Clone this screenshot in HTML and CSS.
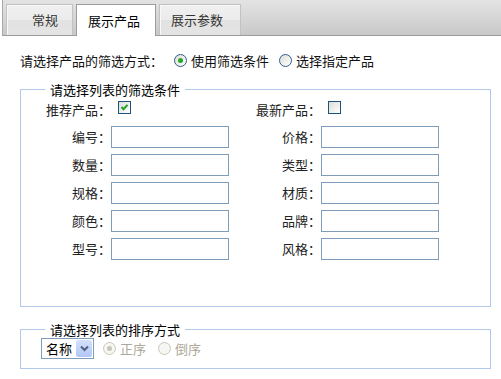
FILE: index.html
```html
<!DOCTYPE html>
<html lang="zh-CN">
<head>
  <meta charset="UTF-8">
  <title>展示产品</title>
  <link rel="stylesheet" href="styles.css">
</head>
<body>
  <div class="tabs">
    <div class="tab tab-first">常规</div>
    <div class="tab active">展示产品</div>
    <div class="tab">展示参数</div>
  </div>

  <div class="panel">
    <div class="mode-row">
      <span class="mode-label">请选择产品的筛选方式：</span>
      <label class="opt opt-first"><span class="radio on"></span>使用筛选条件</label>
      <label class="opt"><span class="radio"></span>选择指定产品</label>
    </div>

    <fieldset class="box filter">
      <legend>请选择列表的筛选条件</legend>
      <div class="grid">
        <label class="lbl">推荐产品：</label>
        <span class="cell">
          <span class="check">
            <svg width="11" height="11" viewBox="0 0 11 11"><path d="M2.5 5 L4.5 7.2 L8.5 2.8" fill="none" stroke="#21a121" stroke-width="2"/></svg>
          </span>
        </span>
        <label class="lbl">最新产品：</label>
        <span class="cell"><span class="check"></span></span>

        <label class="lbl">编号：</label><input class="txt" type="text">
        <label class="lbl">价格：</label><input class="txt" type="text">
        <label class="lbl">数量：</label><input class="txt" type="text">
        <label class="lbl">类型：</label><input class="txt" type="text">
        <label class="lbl">规格：</label><input class="txt" type="text">
        <label class="lbl">材质：</label><input class="txt" type="text">
        <label class="lbl">颜色：</label><input class="txt" type="text">
        <label class="lbl">品牌：</label><input class="txt" type="text">
        <label class="lbl">型号：</label><input class="txt" type="text">
        <label class="lbl">风格：</label><input class="txt" type="text">
      </div>
    </fieldset>

    <fieldset class="box sort">
      <legend>请选择列表的排序方式</legend>
      <div class="sort-row">
        <span class="select">名称
          <span class="drop">
            <svg width="9" height="7" viewBox="0 0 9 7"><path d="M1 1.5 L4.5 5 L8 1.5" fill="none" stroke="#4d6185" stroke-width="2"/></svg>
          </span>
        </span>
        <label class="opt dis"><span class="radio on"></span>正序</label>
        <label class="opt dis"><span class="radio"></span>倒序</label>
      </div>
    </fieldset>
  </div>
</body>
</html>
```

FILE: styles.css
```css
body {
  margin: 0;
  font-family: "Noto Sans CJK SC", "Liberation Sans", sans-serif;
  font-size: 13px;
  color: #111;
  background-color: #ffffff;
}
.tabs {
  display: flex;
  align-items: flex-end;
  gap: 3px;
  height: 35px;
  margin-left: 2px;
  padding-left: 3px;
  border-left: 1px solid #a8a8a8;
  border-bottom: 1px solid #9c9c9c;
  background: linear-gradient(#e3e3e3, #c9c9c9);
}
.tab {
  box-sizing: border-box;
  height: 31px;
  line-height: 29px;
  padding-left: 11px;
  border: 1px solid #c2c2c2;
  border-bottom: none;
  box-shadow: inset 1px 1px 0 #f8f8f8;
  background: linear-gradient(#f0f0f0 0%, #ebebeb 50%, #e2e2e2 51%, #e4e4e4 100%);
  color: #333;
}
.tab-first {
  width: 67px;
  padding-left: 25px;
}
.tab.active {
  width: 80px;
  height: 32px;
  margin-bottom: -1px;
  line-height: 31px;
  border-color: #9c9c9c;
  box-shadow: none;
  background: #ffffff;
  color: #000;
}
.tab:last-child {
  width: 82px;
}
.panel {
  padding: 14px 0 0 20px;
  width: 471px;
}
.mode-row {
  display: flex;
  align-items: center;
  height: 20px;
}
.opt {
  display: flex;
  align-items: center;
  margin-left: 10px;
}
.opt-first {
  margin-left: 11px;
}
.radio {
  box-sizing: border-box;
  position: relative;
  width: 13px;
  height: 13px;
  margin-right: 4px;
  border: 1px solid #2e5d8c;
  border-radius: 50%;
  background: linear-gradient(135deg, #dcdcd7, #ffffff);
}
.radio.on::after {
  content: "";
  position: absolute;
  left: 3px;
  top: 3px;
  width: 5px;
  height: 5px;
  border-radius: 50%;
  background: #25a825;
}
.dis {
  color: #aca899;
}
.dis .radio {
  border-color: #cac8bb;
  background: #f6f6f2;
}
.dis .radio.on::after {
  background: #c8c6b8;
}
.box {
  box-sizing: border-box;
  width: 471px;
  margin: 11px 0 0;
  padding: 0;
  border: 1px solid #b2c8ea;
}
.box legend {
  margin-left: 24px;
  padding: 0 5px;
  line-height: 17px;
  color: #000;
}
.grid {
  display: grid;
  grid-template-columns: 90px 118px 92px 118px;
  grid-template-rows: 20px repeat(5, 22px);
  row-gap: 6px;
  padding: 2px 0 46px;
}
.lbl {
  text-align: right;
  line-height: 22px;
  color: #222;
}
.grid .lbl:first-child,
.grid .lbl:nth-child(3) {
  line-height: 20px;
}
.cell {
  display: flex;
  align-items: flex-start;
}
.check {
  box-sizing: border-box;
  display: flex;
  align-items: center;
  justify-content: center;
  width: 13px;
  height: 13px;
  margin: 1px 0 0 7px;
  border: 1px solid #1c5180;
  background: linear-gradient(135deg, #dcdcd7, #ffffff);
}
.txt {
  box-sizing: border-box;
  width: 118px;
  height: 22px;
  margin: 0;
  border: 1px solid #7f9db9;
  padding: 0 3px;
  font: inherit;
}
.box.sort {
  margin-top: 14px;
}
.sort-row {
  display: flex;
  align-items: center;
  padding: 0 0 9px 20px;
}
.select {
  box-sizing: border-box;
  display: flex;
  align-items: center;
  width: 53px;
  height: 21px;
  padding: 0 1px 0 4px;
  border: 1px solid #7f9db9;
  color: #000;
}
.drop {
  display: flex;
  align-items: center;
  justify-content: center;
  width: 16px;
  height: 17px;
  margin-left: auto;
  border-radius: 2px;
  background: linear-gradient(#d4e0fc, #b3c7f5);
}
.sort-row .opt {
  margin-left: 9px;
}
.sort-row .opt + .opt {
  margin-left: 12px;
}
```
